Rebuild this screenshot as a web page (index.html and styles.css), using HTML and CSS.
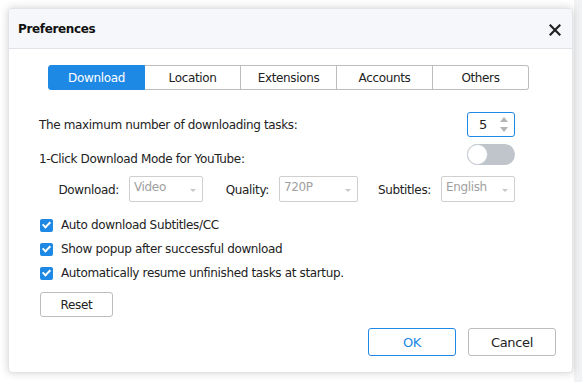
FILE: index.html
```html
<!DOCTYPE html>
<html lang="en">
<head>
    <meta charset="UTF-8">
    <title>Preferences</title>
    <link rel="stylesheet" href="styles.css">
</head>
<body>
    <div class="dialog">
        <header class="dialog-head">
            <h1>Preferences</h1>
            <button class="close" aria-label="Close">
                <svg width="12" height="12" viewBox="0 0 12 12"><path d="M1.5 1.5 10.5 10.5M10.5 1.5 1.5 10.5" stroke="#222" stroke-width="2.2" stroke-linecap="square"/></svg>
            </button>
        </header>

        <section class="dialog-body">
            <nav class="tabs">
                <button class="tab active">Download</button>
                <button class="tab">Location</button>
                <button class="tab">Extensions</button>
                <button class="tab">Accounts</button>
                <button class="tab">Others</button>
            </nav>

            <div class="row row-tasks">
                <span>The maximum number of downloading tasks:</span>
                <div class="spin">
                    <span>5</span>
                    <div class="arrows">
                        <i class="up"></i>
                        <i class="down"></i>
                    </div>
                </div>
            </div>

            <div class="row row-youtube">
                <span>1-Click Download Mode for YouTube:</span>
                <div class="toggle"><i></i></div>
            </div>

            <div class="options">
                <label>Download:</label>
                <div class="select">Video</div>
                <label>Quality:</label>
                <div class="select">720P</div>
                <label>Subtitles:</label>
                <div class="select">English</div>
            </div>

            <ul class="checks">
                <li><i class="box"></i>Auto download Subtitles/CC</li>
                <li><i class="box"></i>Show popup after successful download</li>
                <li><i class="box"></i>Automatically resume unfinished tasks at startup.</li>
            </ul>

            <button class="btn reset">Reset</button>
        </section>

        <footer class="dialog-foot">
            <button class="btn ok">OK</button>
            <button class="btn">Cancel</button>
        </footer>
    </div>
</body>
</html>
```

FILE: styles.css
```css
* {
    box-sizing: border-box;
}

body {
    margin: 0;
    padding: 8px;
    width: 582px;
    height: 382px;
    overflow: hidden;
    font-family: 'DejaVu Sans', sans-serif;
    font-size: 12px;
    letter-spacing: -0.35px;
    color: #222;
    background: #fff linear-gradient(to right, #fff 574px, #f1f2f3 574px);
}

button {
    font: inherit;
    letter-spacing: inherit;
    color: inherit;
    cursor: pointer;
}

.dialog {
    width: 565px;
    height: 365px;
    background: #fff;
    border: 1px solid #e2e4e6;
    border-radius: 4px;
    box-shadow: 0 0 8px rgba(0, 0, 0, 0.18);
    display: flex;
    flex-direction: column;
    overflow: hidden;
}

.dialog-head {
    height: 40px;
    background: #f5f7fa;
    border-bottom: 1px solid #dfe2e6;
    display: flex;
    align-items: center;
    justify-content: space-between;
    padding: 0 11px 0 9px;

    h1 {
        margin: 0;
        font-size: 12px;
        font-weight: bold;
        color: #111;
    }

    .close {
        border: 0;
        background: none;
        padding: 0;
        display: flex;
        margin-top: 3px;
    }
}

.dialog-body {
    flex: 1;
    padding: 16px 57px 0 30px;
    display: flex;
    flex-direction: column;
}

.tabs {
    display: flex;
    margin-left: 9px;
    width: 481px;

    .tab {
        flex: 1;
        height: 25px;
        border: 1px solid #bdbdbd;
        border-left-width: 0;
        background: #fff;
        padding: 0;
    }

    .tab:first-child {
        border-left-width: 1px;
        border-radius: 3px 0 0 3px;
    }

    .tab:last-child {
        border-radius: 0 3px 3px 0;
    }

    .tab.active {
        background: #1e88e5;
        border-color: #1e88e5;
        color: #fff;
    }
}

.row {
    display: flex;
    align-items: center;
    justify-content: space-between;
}

.row-tasks {
    margin-top: 22px;
    height: 25px;
}

.spin {
    width: 48px;
    height: 25px;
    border: 1px solid #1e88e5;
    border-radius: 3px;
    display: flex;
    align-items: center;
    justify-content: space-between;
    padding: 0 6px 0 11px;
    font-size: 13px;

    .arrows {
        display: flex;
        flex-direction: column;
        gap: 5px;
    }

    i {
        width: 0;
        height: 0;
        border-left: 4px solid transparent;
        border-right: 4px solid transparent;
    }

    .up {
        border-bottom: 5px solid #b4b4b4;
    }

    .down {
        border-top: 5px solid #b4b4b4;
    }
}

.row-youtube {
    margin-top: 6px;
    height: 22px;

    span {
        margin-top: 10px;
    }
}

.toggle {
    width: 48px;
    height: 21px;
    border-radius: 11px;
    background: #bfc5ca;
    position: relative;

    i {
        position: absolute;
        left: 0;
        top: 0;
        width: 21px;
        height: 21px;
        border-radius: 50%;
        background: #fff;
        border: 1px solid #c6cbd0;
    }
}

.options {
    display: grid;
    grid-template-columns: 90px 74px 76px 79px 83px 74px;
    align-items: center;
    margin-top: 11px;
    height: 26px;

    label {
        text-align: right;
        padding-right: 10px;
        margin-top: 2px;
    }

    .select {
        height: 26px;
        border: 1px solid #cfcfcf;
        border-radius: 2px;
        color: #a0a0a0;
        padding: 3px 0 0 4px;
        position: relative;
    }

    .select::after {
        content: '';
        position: absolute;
        right: 6px;
        top: 12px;
        border-left: 3px solid transparent;
        border-right: 3px solid transparent;
        border-top: 3px solid #c8c8c8;
    }
}

.checks {
    list-style: none;
    margin: 11px 0 0;
    padding: 0;

    li {
        height: 24px;
        display: flex;
        align-items: center;
        gap: 8px;
        padding-left: 1px;
    }

    .box {
        width: 13px;
        height: 13px;
        border-radius: 2px;
        background: #1e88e5;
        position: relative;
    }

    .box::after {
        content: '';
        position: absolute;
        left: 4px;
        top: 1.5px;
        width: 3px;
        height: 6px;
        border: solid #fff;
        border-width: 0 2px 2px 0;
        transform: rotate(45deg);
    }
}

.btn {
    height: 25px;
    background: #fff;
    border: 1px solid #bdbdbd;
    border-radius: 3px;
    padding: 0;
}

.reset {
    width: 73px;
    margin: 7px 0 0 1px;
}

.dialog-foot {
    display: flex;
    justify-content: flex-end;
    gap: 12px;
    padding: 0 16px 16px 0;

    .btn {
        width: 88px;
        height: 28px;
        font-size: 13px;
    }

    .ok {
        border-color: #1e88e5;
        color: #1e88e5;
    }
}
```
